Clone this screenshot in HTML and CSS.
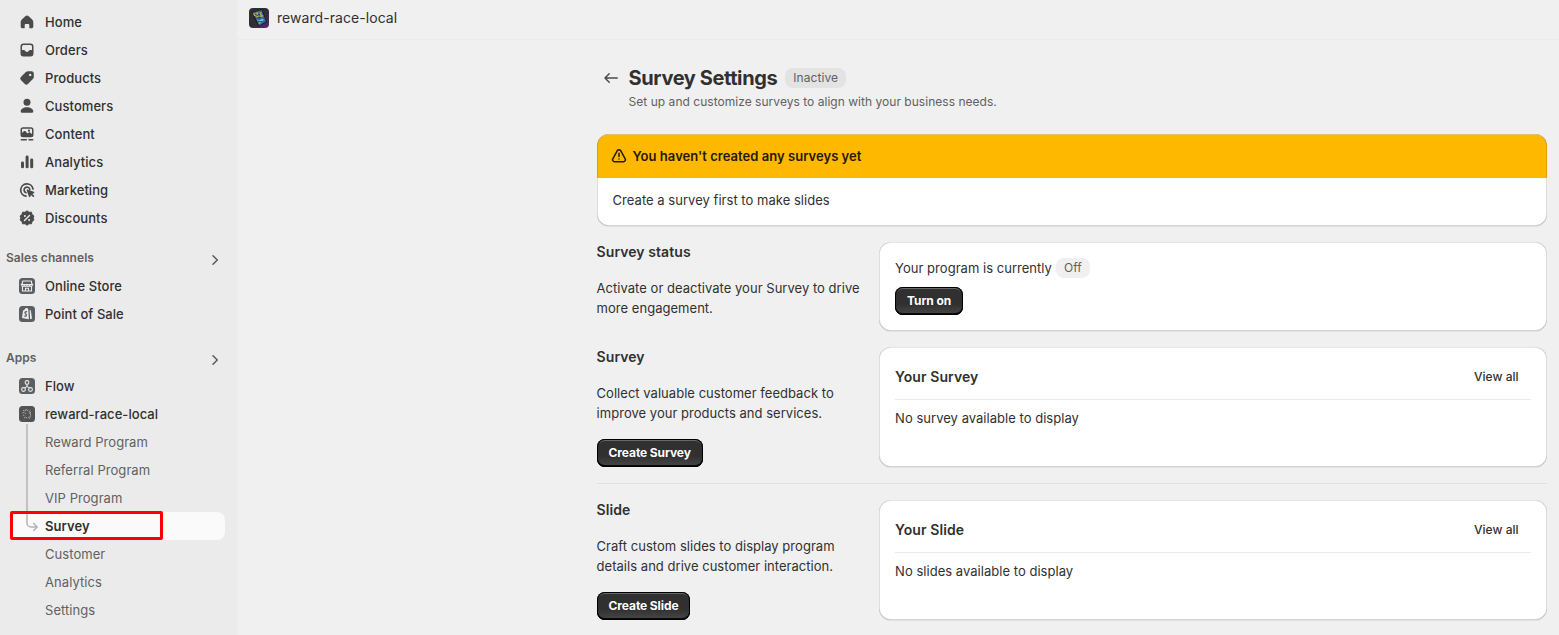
FILE: index.html
```html
<!DOCTYPE html>
<html lang="en">
<head>
<meta charset="utf-8">
<title>Survey Settings</title>
<link rel="stylesheet" href="styles.css">
</head>
<body>
<div class="app">
  <nav class="sidebar">
    <ul class="nav">
      <li class="item"><svg class="icon" viewBox="0 0 20 20"><path d="M8.3 4.2a2.5 2.5 0 0 1 3.4 0l3.5 3.3c.7.7 1.1 1.6 1.1 2.6v4.4c0 1-.8 1.8-1.8 1.8h-2.2v-3.2a1 1 0 0 0-1-1H8.700a1 1 0 0 0-1 1v3.200h-2.200c-1 0-1.800-.8-1.800-1.800v-4.400c0-1 .4-1.900 1.100-2.600z"/></svg>Home</li>
      <li class="item"><svg class="icon" viewBox="0 0 20 20"><path fill-rule="evenodd" d="M6.500 3.500h7a3 3 0 0 1 3 3v7a3 3 0 0 1-3 3h-7a3 3 0 0 1-3-3v-7a3 3 0 0 1 3-3zM6.500 5A1.500 1.500 0 0 0 5 6.500V10h1.900c.6 0 1 .3 1.200.8.3.7 1 1.200 1.900 1.200s1.600-.5 1.900-1.200c.2-.5.6-.8 1.200-.8H15V6.500A1.500 1.500 0 0 0 13.500 5z"/></svg>Orders</li>
      <li class="item"><svg class="icon" viewBox="0 0 20 20"><path fill-rule="evenodd" d="M11.200 3.200h3.300a2.300 2.300 0 0 1 2.300 2.300v3.300c0 .8-.3 1.500-.9 2.100l-5 5a2.200 2.200 0 0 1-3.100 0l-3.900-3.900a2.200 2.200 0 0 1 0-3.100l5-5c.6-.5 1.400-.7 2.300-.7zM13.200 8.100a1.200 1.200 0 1 0 0-2.400 1.200 1.200 0 0 0 0 2.400z"/></svg>Products</li>
      <li class="item"><svg class="icon" viewBox="0 0 20 20"><circle cx="10" cy="6.300" r="3.500"/><path d="M10 11.200c-3.400 0-6.300 1.700-6.300 4 0 1 .8 1.500 1.700 1.500h9.200c.9 0 1.700-.5 1.700-1.500 0-2.300-2.900-4-6.300-4z"/></svg>Customers</li>
      <li class="item"><svg class="icon" viewBox="0 0 20 20"><path fill-rule="evenodd" d="M6 3.300h8a2.500 2.500 0 0 1 2.500 2.500v4.900a2.500 2.500 0 0 1-2.500 2.500H6a2.500 2.500 0 0 1-2.500-2.500V5.800A2.500 2.500 0 0 1 6 3.300zM5 8.900l2-1.800c.4-.3.900-.3 1.300 0l2.300 2.300 1.200-.9c.4-.3.800-.3 1.200 0l2 1.600V5.800c0-.5-.4-1-1-1H6c-.6 0-1 .5-1 1z"/><circle cx="12" cy="6.700" r="1.100"/><path class="line" d="M4.300 15.700h5M12 15.700h3.700"/></svg>Content</li>
      <li class="item"><svg class="icon" viewBox="0 0 20 20"><rect x="8.600" y="3.500" width="3" height="12.800" rx="1.400"/><rect x="4" y="9.500" width="3" height="6.800" rx="1.400"/><rect x="13.200" y="6.500" width="3" height="9.800" rx="1.400"/></svg>Analytics</li>
      <li class="item"><svg class="icon" viewBox="0 0 20 20"><path class="line bold" d="M16 9A6.200 6.200 0 1 0 9 16.200M12.800 9.300A2.900 2.900 0 1 0 9 12.700"/><path d="M9.700 10.500c-.2-.6.300-1.100.9-.9l6.200 2.200c.7.200.7 1.200 0 1.500l-1.500.6 1.700 1.700c.8.8-.4 2-1.200 1.200l-1.800-1.700-.6 1.500c-.3.700-1.300.7-1.500 0z"/></svg>Marketing</li>
      <li class="item"><svg class="icon" viewBox="0 0 20 20"><path d="m10 2.800 2 1.500 2.500-.1.500 2.400 2 1.500-1 1.900 1 1.900-2 1.500-.5 2.400-2.500-.1-2 1.500-2-1.500-2.500.1-.5-2.400-2-1.500 1-1.900-1-1.900 2-1.500.5-2.400 2.500.1z" stroke="#4a4a4a" stroke-width="1" stroke-linejoin="round"/><path d="m7.500 12.500 5-5" stroke="#ebebeb" stroke-width="1.400" stroke-linecap="round"/><circle cx="7.900" cy="8" r="1" fill="#ebebeb"/><circle cx="12.100" cy="12" r="1" fill="#ebebeb"/></svg>Discounts</li>
    </ul>
    <h2 class="group">Sales channels<svg class="chevron" viewBox="0 0 20 20"><path d="m8 5.700 4.300 4.300L8 14.300"/></svg></h2>
    <ul class="nav">
      <li class="item"><svg class="tile" viewBox="0 0 16 16"><rect width="16" height="16" rx="3.500" fill="#5c5f62"/><path d="M3.500 3h9M3.500 3v2L2.500 6.500h11l-1-1.500V3M2.700 7c0 1.800 2.600 1.800 2.600 0 0 1.800 2.700 1.800 2.700 0 0 1.800 2.700 1.800 2.700 0 0 1.800 2.600 1.800 2.600 0M3.500 8.500V13h9V8.500M6.500 13v-2.700h3V13"/></svg>Online Store</li>
      <li class="item"><svg class="tile" viewBox="0 0 16 16"><rect width="16" height="16" rx="3.500" fill="#5c5f62"/><path class="bag" d="m4 4.500 1.300-.5c.6-1.600 1.500-2 2.400-2 .9 0 1.300.7 1.500 1.300l.7 9.900-6.900-1.300zM10.600 3.700l1.200.8L13 12.600l-1.900.6z"/><path class="bag-mark" d="M8 5.800C6.500 5.100 5.300 6.500 6.400 7.500 8 8.700 7.500 10.800 5.300 10"/></svg>Point of Sale</li>
    </ul>
    <h2 class="group">Apps<svg class="chevron" viewBox="0 0 20 20"><path d="m8 5.700 4.300 4.300L8 14.300"/></svg></h2>
    <ul class="nav">
      <li class="item"><svg class="tile" viewBox="0 0 16 16"><rect width="16" height="16" rx="3.500" fill="#5c5f62"/><circle cx="8" cy="4.500" r="1.900"/><circle cx="4.500" cy="11.500" r="1.900"/><circle cx="11.500" cy="11.500" r="1.900"/><path d="M8 6.400v2L5.600 9.900M8 8.400l2.400 1.500"/></svg>Flow</li>
      <li class="item"><svg class="tile" viewBox="0 0 16 16"><rect width="16" height="16" rx="3.500" fill="#535353"/><path class="speckle" d="m4 4.500 2 .5 1-2 1 2 2-1.500M3.500 7l2.500-1M11 4.500 10 7l2 1M4 9l2 1M5 12l2-1 1 2M9 12l2-1.500-.5 2.500M6 7l1 1M11.500 6v5"/></svg>reward-race-local</li>
    </ul>
    <ul class="nav sub">
      <li class="item">Reward Program</li>
      <li class="item">Referral Program</li>
      <li class="item">VIP Program</li>
      <li class="item current">Survey</li>
      <li class="item">Customer</li>
      <li class="item">Analytics</li>
      <li class="item">Settings</li>
      <li class="trail"><svg width="14" height="110" viewBox="0 0 14 110"><path d="M1 0v99a4 4 0 0 0 4 4h6M7.700 99.500 11.200 103l-3.500 3.500"/></svg></li>
      <li class="highlight"></li>
    </ul>
  </nav>
  <main class="main">
    <header class="topbar">
      <svg class="logo" viewBox="0 0 20 20"><defs><linearGradient id="lg" x2="1" y2="1"><stop offset=".5" stop-color="#302d33"/><stop offset="1" stop-color="#5b2673"/></linearGradient></defs><rect width="20" height="20" rx="4" fill="url(#lg)"/><path d="m3 4 10-3 5 13-9 4.500z" fill="#19191f"/><path d="m4 4.500 8.500-2.500L17 13.500 10 17.500z" fill="#2f6d9c"/><path d="m4 5 3 .7 1-2 1.500 1.500 3-1.500-.3 2.800 2.300 1.200-2.200 1.500L10 8 8 10.500 7.500 8.500 5 8z" fill="#c9a936"/><path d="m8 11.500 2 1 4-2 .5 2-2.500.7 1 1.600-3 .9z" fill="#7cc3cf"/><path d="m6 6.500 3 1L10 5.500l1 2.500M8 10l4-.5M9 13.500l4 .5" stroke="#193768" fill="none"/></svg>
      <span>reward-race-local</span>
    </header>
    <div class="page">
      <div class="page-head">
        <svg class="back" viewBox="0 0 20 20"><path d="M16.200 10H4M8.200 5.800 4 10l4.200 4.200"/></svg>
        <div>
          <div class="title-row"><h1>Survey Settings</h1><span class="badge strong">Inactive</span></div>
          <p class="subtitle">Set up and customize surveys to align with your business needs.</p>
        </div>
      </div>
      <section class="card banner">
        <div class="banner-head"><svg viewBox="0 0 20 20"><path d="M8.300 4.600c.8-1.300 2.600-1.300 3.400 0l4.500 8.200c.7 1.300-.2 2.900-1.700 2.900h-9c-1.500 0-2.400-1.600-1.700-2.900zM10 7.200v3.300M10 12.900v.2"/></svg><h3>You haven't created any surveys yet</h3></div>
        <p class="banner-body">Create a survey first to make slides</p>
      </section>
      <section class="row status">
        <div class="info"><h3>Survey status</h3><p>Activate or deactivate your Survey to drive more engagement.</p></div>
        <div class="card panel"><p class="state">Your program is currently <span class="badge">Off</span></p><button class="btn">Turn on</button></div>
      </section>
      <section class="row">
        <div class="info"><h3>Survey</h3><p>Collect valuable customer feedback to improve your products and services.</p><button class="btn">Create Survey</button></div>
        <div class="card panel"><div class="panel-head"><h3>Your Survey</h3><a>View all</a></div><p>No survey available to display</p></div>
      </section>
      <hr class="divider">
      <section class="row">
        <div class="info"><h3>Slide</h3><p>Craft custom slides to display program details and drive customer interaction.</p><button class="btn">Create Slide</button></div>
        <div class="card panel"><div class="panel-head"><h3>Your Slide</h3><a>View all</a></div><p>No slides available to display</p></div>
      </section>
    </div>
  </main>
</div>
</body>
</html>
```
FILE: styles.css
```css
* { box-sizing: border-box; margin: 0; padding: 0; }
body { font: 400 13px/20px Inter, "Liberation Sans", sans-serif; color: #303030; background: #f0f0f0; overflow: hidden; }
ul { list-style: none; }
.app { display: flex; height: 635px; overflow: hidden; }

.sidebar { width: 237px; flex: none; background: #ebebeb; padding: 8px 12px 0 11px; }
.item { display: flex; align-items: center; height: 28px; padding-left: 6px; font-weight: 500; letter-spacing: .06px; border-radius: 8px; }
.icon { width: 20px; height: 20px; margin-right: 8px; fill: #4a4a4a; }
.line { fill: none; stroke: #4a4a4a; stroke-width: 1.500; stroke-linecap: round; }
.bold { stroke-width: 1.700; }
.tile { width: 16px; height: 16px; margin: 0 10px 0 2px; fill: none; }
.tile path, .tile circle { stroke: #ebebeb; stroke-width: 1.100; }
.tile .bag { fill: #ebebeb; stroke: none; }
.tile .bag-mark { stroke: #5c5f62; stroke-width: 1.300; }
.tile .speckle { stroke: #b0b0b0; stroke-width: .9; stroke-dasharray: 1.500 .7; }
.group { display: flex; justify-content: space-between; align-items: center; height: 28px; margin: 12px 0 0 -5px; font-size: 12px; font-weight: 600; letter-spacing: .05px; color: #616161; }
.nav ~ .nav + .group { margin-top: 16px; }
.chevron { width: 20px; height: 20px; position: relative; top: 2px; fill: none; stroke: #5a5a5a; stroke-width: 1.500; stroke-linecap: round; stroke-linejoin: round; }
.sub { position: relative; }
.sub .item { padding-left: 34px; font-weight: 400; color: #616161; }
.sub .current { background: #fafafa; color: #303030; font-weight: 600; }
.trail { position: absolute; left: 15px; top: -4px; }
.trail svg { display: block; fill: none; stroke: #b5b5b5; stroke-width: 1.500; stroke-linecap: round; stroke-linejoin: round; }
.highlight { position: absolute; left: -1px; top: 83px; width: 153px; height: 29px; border: 3px solid #fb0007; border-radius: 2px; }

.main { flex: 1; min-width: 0; letter-spacing: .03px; }
.topbar { display: flex; align-items: center; gap: 8px; height: 40px; padding: 0 12px 3px; border-bottom: 1px solid #ebebeb; font-size: 14px; letter-spacing: .06px; }
.logo { width: 20px; height: 20px; }
.page { width: 950px; margin-left: 359.600px; padding-top: 26px; }
.page-head { display: flex; gap: 8px; height: 68px; padding-left: 4px; }
.back { width: 20px; height: 20px; margin-top: 2px; fill: none; stroke: #4a4a4a; stroke-width: 1.500; stroke-linecap: round; stroke-linejoin: round; }
.title-row { display: flex; align-items: center; gap: 8px; height: 24px; }
h1 { font-size: 20px; line-height: 24px; font-weight: 650; letter-spacing: -.4px; }
h3 { font-size: 14px; line-height: 20px; font-weight: 600; letter-spacing: .07px; }
.subtitle { margin-top: 2px; font-size: 12px; color: #616161; }
.badge { padding: 0 8px; height: 20px; line-height: 20px; border-radius: 8px; font-size: 12px; letter-spacing: .08px; color: #616161; background: #f0f0f0; }
.badge.strong { background: #e3e3e3; }
.card { background: #fff; border-radius: 12px; box-shadow: 0 1px 0 rgba(26,26,26,.07), inset 1px 0 0 rgba(0,0,0,.13), inset -1px 0 0 rgba(0,0,0,.13), inset 0 -1px 0 rgba(0,0,0,.17), inset 0 1px 0 rgba(204,204,204,.5); }
.banner { height: 92px; }
.banner-head { display: flex; align-items: center; gap: 4px; height: 44px; padding-left: 12px; background: #ffb800; color: #251a00; border-radius: 12px 12px 0 0; box-shadow: inset 1px 0 0 rgba(0,0,0,.13), inset -1px 0 0 rgba(0,0,0,.13), inset 0 1px 0 rgba(204,204,204,.5); }
.banner-head svg { width: 20px; height: 20px; fill: none; stroke: #251a00; stroke-width: 1.500; stroke-linecap: round; }
.banner-head h3 { font-size: 13px; letter-spacing: .03px; }
.banner-body { padding: 12px 16px; }
.row { display: grid; grid-template-columns: 266.500px 667.500px; gap: 16px; height: 119px; }
.status { height: 89px; margin: 16px 0; }
.info h3 { margin-bottom: 16px; }
.info .btn { margin-top: 16px; }
.panel { padding: 16px; }
.state { display: flex; align-items: center; gap: 4px; }
.state + .btn { margin-top: 9px; }
.panel-head { display: flex; justify-content: space-between; align-items: flex-start; height: 37px; padding: 4px 12px 0 0; margin-bottom: 8px; border-bottom: 1px solid #ebebeb; }
.panel-head a { font-size: 12px; font-weight: 500; }
.divider { border: 0; height: 1px; background: #e0e0e0; margin: 17px 0 16px; }
.btn { display: block; height: 28px; padding: 0 12px; border: 0; border-radius: 8px; font: 650 12px/28px Inter, "Liberation Sans", sans-serif; letter-spacing: -.1px; color: #fff; background: linear-gradient(#303030 60%, #484848); box-shadow: inset 0 0 0 1px #000, inset 0 -2px 0 #080808, inset 0 2px 0 #686868; }
```
